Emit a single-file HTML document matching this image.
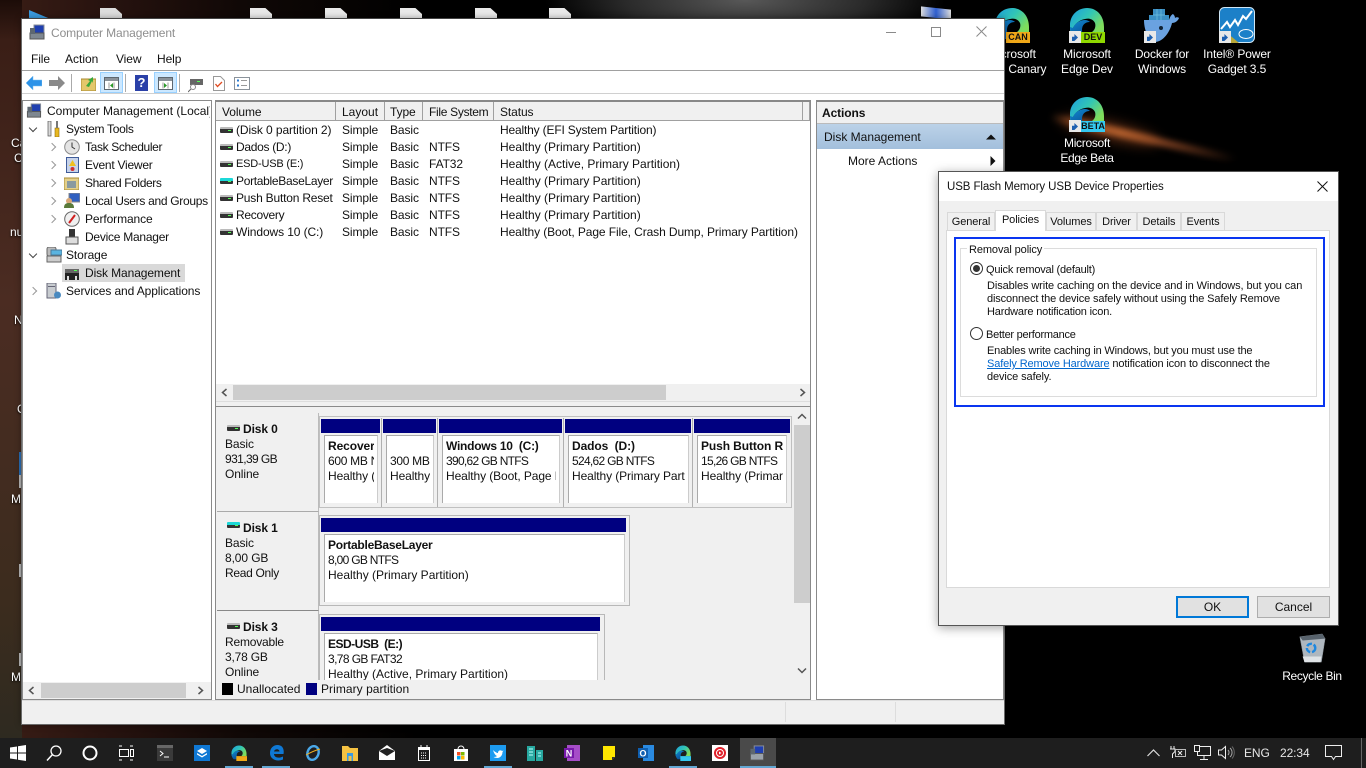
<!DOCTYPE html>
<html><head><meta charset="utf-8"><title>Computer Management</title>
<style>
*{box-sizing:border-box}
html,body{margin:0;padding:0;width:1366px;height:768px;overflow:hidden;background:#000;font-family:"Liberation Sans",sans-serif;font-size:12px;color:#111}
.a,.t,.i{position:absolute}
.t{white-space:nowrap;line-height:16px;height:16px;letter-spacing:-.1px}
.z{letter-spacing:0}
.m{letter-spacing:-.7px}
.d{color:#fff;text-align:center;text-shadow:0 1px 2px #000,0 0 2px #000;width:90px;line-height:15px;white-space:normal;height:auto}
.h{background:#f0f0f0;border-right:1px solid #a0a0a0;border-bottom:1px solid #a0a0a0;height:19px;top:102px}
.n{background:#000080;height:14px}
.b{background:#fff;border:1px solid #aaa;border-bottom:0;border-right-color:#ccc}
.w{position:absolute;left:0;top:0;right:3px;bottom:0;overflow:hidden}
.p{background:#f0f0f0;border:1px solid #b8b8b8}
.tab{background:#f0f0f0;border:1px solid #d9d9d9;border-bottom:0;text-align:center;top:212px;height:18px;line-height:19px;font-size:11px;letter-spacing:-.1px}
.dsk{position:absolute;width:13px;height:6px;background:linear-gradient(#bbb 0 2px,#333 2px);border-radius:1px}
.dsk:after{content:"";position:absolute;right:2px;top:3px;width:3px;height:1px;background:#5f5}
.ch{position:absolute;width:6px;height:6px;border-right:1.3px solid #999;border-top:1.3px solid #999;transform:rotate(45deg)}
.cd{position:absolute;width:6px;height:6px;border-right:1.4px solid #444;border-bottom:1.4px solid #444;transform:rotate(45deg)}
.doc{position:absolute;top:8px;width:22px;height:10px;background:#e9e9e9;clip-path:polygon(0 0,70% 0,100% 60%,100% 100%,0 100%)}
.tb{position:absolute;top:745px;width:16px;height:16px}
.ul{position:absolute;top:766px;height:2px;background:#63a7d3}
.sc{position:absolute;width:12px;height:12px;background:#e8e8e8}
.sc i{display:block;width:6px;height:7px;margin:3px;background:#1d5fb0;clip-path:polygon(0 100%,0 40%,40% 40%,40% 0,100% 50%,40% 100%)}
.lb{position:absolute;height:11px;color:#111;font:bold 9px/11px "Liberation Sans",sans-serif;text-align:center}
</style></head><body>

<!-- wallpaper -->
<div class="a" style="left:0;top:0;width:1366px;height:768px;background:
radial-gradient(ellipse 200px 50px at 745px 0,#585858 0,#2a2a2a 60%,rgba(0,0,0,0) 100%),
linear-gradient(90deg,#3a1e16 0,#2a1410 90px,#100806 240px,#000 420px)"></div>
<div class="a" style="left:0;top:0;width:22px;height:740px;background:linear-gradient(#1c0c08,#3a1e16 40px,#4b2c22 300px,#3c2c1e 600px,#2e2a20)"></div>
<div class="a" style="left:1048px;top:134px;width:190px;height:8px;background:linear-gradient(90deg,rgba(150,70,30,0),#b8602c 20%,#d47a3c 38%,#7a3e20 60%,rgba(60,30,20,0));transform:rotate(13deg);filter:blur(3px)"></div>
<div class="a" style="left:1060px;top:122px;width:100px;height:18px;background:rgba(150,70,30,.55);transform:rotate(13deg);filter:blur(6px);border-radius:50%"></div>

<!-- desktop icons behind -->
<div class="a" style="left:29px;top:10px;width:24px;height:10px;background:#3a9be0;clip-path:polygon(0 0,100% 100%,0 100%)"></div>
<div class="doc" style="left:100px;background:#ddd"></div>
<div class="doc" style="left:250px"></div><div class="doc" style="left:325px"></div><div class="doc" style="left:400px"></div><div class="doc" style="left:475px"></div><div class="doc" style="left:549px"></div>
<div class="a" style="left:921px;top:8px;width:30px;height:10px;background:linear-gradient(90deg,#ddd,#2f5fd0 50%,#ddd);transform:skewY(6deg)"></div>
<div class="t" style="left:11px;top:135px;color:#fff;text-shadow:0 1px 2px #000">Ca</div>
<div class="t" style="left:14px;top:150px;color:#fff;text-shadow:0 1px 2px #000">C</div>
<div class="t" style="left:10px;top:224px;color:#fff;text-shadow:0 1px 2px #000">nu</div>
<div class="t" style="left:14px;top:312px;color:#fff;text-shadow:0 1px 2px #000">N</div>
<div class="t" style="left:17px;top:401px;color:#fff;text-shadow:0 1px 2px #000">C</div>
<div class="t" style="left:11px;top:491px;color:#fff;text-shadow:0 1px 2px #000">M</div>
<div class="t" style="left:11px;top:669px;color:#fff;text-shadow:0 1px 2px #000">M</div>
<div class="a" style="left:19px;top:452px;width:2px;height:23px;background:#2a70b8"></div>
<div class="a" style="left:19px;top:475px;width:2px;height:13px;background:#bbb"></div>
<div class="a" style="left:19px;top:564px;width:2px;height:13px;background:#bbb"></div>
<div class="a" style="left:19px;top:653px;width:2px;height:13px;background:#bbb"></div>

<svg width="0" height="0" style="position:absolute"><defs>
<linearGradient id="eg" x1="0" y1="0" x2="1" y2=".6"><stop offset="0" stop-color="#1b9de2"/><stop offset=".55" stop-color="#32c6b4"/><stop offset="1" stop-color="#7fdc5c"/></linearGradient>
<linearGradient id="eb" x1="0" y1="0" x2=".6" y2="1"><stop offset="0" stop-color="#0f8ad0"/><stop offset="1" stop-color="#0b4f96"/></linearGradient>
<symbol id="edge" viewBox="0 0 36 36"><path d="M1 18C1 8 9 1 18 1c10 0 17 8 17 19v5H23c3-2 4-6 3-9-2-4-6-5-10-4-6 1-10 5-12 9l-3 3z" fill="url(#eg)"/><path d="M4 21c2-5 7-8 12-8 2 0 4 1 5 2-5 0-8 3-8 8 0 3 1 6 3 9H6C3 29 1 25 1 20z" fill="url(#eb)"/></symbol>
</defs></svg>

<!-- top right desktop icons -->
<svg class="i" style="left:994px;top:7px" width="36" height="36"><use href="#edge" width="36" height="36"/></svg>
<div class="lb" style="left:1006px;top:32px;width:24px;background:#f0a818">CAN</div>
<div class="t d" style="left:964px;top:47px;width:96px">Microsoft<br>Edge Canary</div>

<svg class="i" style="left:1069px;top:7px" width="36" height="36"><use href="#edge" width="36" height="36"/></svg>
<div class="lb" style="left:1081px;top:32px;width:24px;background:#8fd800">DEV</div>
<div class="sc" style="left:1069px;top:31px"><i></i></div>
<div class="t d" style="left:1042px;top:47px">Microsoft<br>Edge Dev</div>

<svg class="i" style="left:1144px;top:8px" width="36" height="36" viewBox="0 0 36 36"><path d="M0 12h25c1-3 2-5 4-6 1 1 2 2 2 4 1-1 3-1 4 0-1 3-4 5-7 5-2 9-9 19-17 19C6 34 0 24 0 12z" fill="#6aa2e0"/><path d="M5 12V7h4V1h12v6h4v5z" fill="#3b8fc4"/><path d="M9 7h12M13 1v11M17 1v11" stroke="#6fc0e0" stroke-width=".7"/><circle cx="17" cy="20" r="2" fill="#123"/></svg>
<div class="sc" style="left:1144px;top:31px"><i></i></div>
<div class="t d" style="left:1117px;top:47px">Docker for<br>Windows</div>

<svg class="i" style="left:1219px;top:7px" width="36" height="36" viewBox="0 0 36 36"><rect x=".5" y=".5" width="35" height="35" rx="5" fill="#1c80c8" stroke="#cfe6f5"/><path d="M2 22 8 15l3 5 5-7 3 5 5-9 3 3 6-8" fill="none" stroke="#fff" stroke-width="2"/><ellipse cx="27" cy="27" rx="7" ry="4.500" fill="#1c80c8" stroke="#fff"/><path d="M0 30 6 24 20 36H5a5 5 0 0 1-5-5z" fill="#b9a83a"/></svg>
<div class="sc" style="left:1219px;top:31px"><i></i></div>
<div class="t d" style="left:1192px;top:47px">Intel® Power<br>Gadget 3.5</div>

<svg class="i" style="left:1069px;top:96px" width="36" height="36"><use href="#edge" width="36" height="36"/></svg>
<div class="lb" style="left:1081px;top:121px;width:24px;background:#35c8f0">BETA</div>
<div class="sc" style="left:1069px;top:120px"><i></i></div>
<div class="t d" style="left:1042px;top:136px;letter-spacing:-.3px">Microsoft<br>Edge Beta</div>

<svg class="i" style="left:1297px;top:631px" width="30" height="34" viewBox="0 0 32 34"><path d="M3 5 27 2l3 5-4 25H8L3 5z" fill="#aeb7bf" stroke="#8a929a" stroke-width=".5"/><path d="M3 5l24-3 3 5-24 2z" fill="#59646e"/><path d="M6 26h20l-1 6H8z" fill="#dfe3e6"/><circle cx="15" cy="17" r="4.500" fill="none" stroke="#1e88e0" stroke-width="2.600" stroke-dasharray="6 2"/></svg>
<div class="t d" style="left:1267px;top:669px;letter-spacing:-.35px">Recycle Bin</div>

<!-- main window -->
<div class="a" style="left:21px;top:18px;width:984px;height:707px;background:#fff;border:1px solid #6a6a6a;border-top-color:#444;box-shadow:0 0 6px rgba(0,0,0,.35)"></div>
<svg class="i" style="left:29px;top:24px" width="16" height="17" viewBox="0 0 16 17"><rect x="5" y="1" width="10" height="9" fill="#1f3fb0" stroke="#8a8f98"/><rect x="1" y="9" width="14" height="6" fill="#7e8790" stroke="#555"/><rect x="1" y="4" width="5" height="6" fill="#5d6770"/></svg>
<div class="t" style="left:51px;top:25px;color:#8e8e8e;font-size:12px;letter-spacing:-.1px">Computer Management</div>
<div class="a" style="left:886px;top:32px;width:10px;height:1px;background:#8a8a8a"></div>
<div class="a" style="left:931px;top:27px;width:10px;height:10px;border:1px solid #8a8a8a"></div>
<svg class="i" style="left:976px;top:26px" width="11" height="11"><path d="M.5.5l10 10M10.5.5l-10 10" stroke="#8a8a8a"/></svg>

<div class="t" style="left:31px;top:51px">File</div><div class="t z" style="left:65px;top:51px">Action</div><div class="t" style="left:116px;top:51px">View</div><div class="t" style="left:157px;top:51px">Help</div>
<div class="a" style="left:22px;top:70px;width:982px;height:1px;background:#a0a0a0"></div>
<div class="a" style="left:22px;top:71px;width:982px;height:23px;background:#fff;border-bottom:1px solid #d0d0d0"></div>
<!-- toolbar -->
<svg class="i" style="left:26px;top:76px" width="16" height="14"><path d="M0 7 7 0v4h9v6H7v4z" fill="#2d93e8" stroke="#7cc0f0" stroke-width=".5"/></svg>
<svg class="i" style="left:49px;top:76px" width="16" height="14"><path d="M16 7 9 0v4H0v6h9v4z" fill="#8a8a8a"/></svg>
<div class="a" style="left:71px;top:74px;width:1px;height:18px;background:#aaa"></div>
<svg class="i" style="left:81px;top:76px" width="15" height="15"><rect y="3" width="15" height="12" fill="#e4c76a" stroke="#a88a30"/><path d="M5 10 9 5 7 4l5-3v6l-1-2-3 6z" fill="#3aa83a"/></svg>
<div class="a" style="left:100px;top:72px;width:23px;height:21px;background:#cce8ff;border:1px solid #99d1ff"></div>
<svg class="i" style="left:104px;top:77px" width="15" height="13"><rect x=".5" y=".5" width="14" height="12" fill="#fff" stroke="#5d6770"/><rect x="1" y="1" width="13" height="3" fill="#8a929a"/><path d="M5 5.500v6M10 5.500v6" stroke="#999"/><path d="M9 6v5L6 8.500z" fill="#2a9a2a"/></svg>
<div class="a" style="left:125px;top:74px;width:1px;height:18px;background:#aaa"></div>
<div class="a" style="left:135px;top:75px;width:13px;height:16px;background:#2a40a8;color:#fff;font:bold 13px/16px 'Liberation Sans',sans-serif;text-align:center">?</div>
<div class="a" style="left:154px;top:72px;width:23px;height:21px;background:#cce8ff;border:1px solid #99d1ff"></div>
<svg class="i" style="left:158px;top:77px" width="15" height="13"><rect x=".5" y=".5" width="14" height="12" fill="#fff" stroke="#5d6770"/><rect x="1" y="1" width="13" height="3" fill="#8a929a"/><path d="M5 5.500v6M10 5.500v6" stroke="#999"/><path d="M6 6v5l3-2.500z" fill="#2a9a2a"/></svg>
<div class="a" style="left:179px;top:74px;width:1px;height:18px;background:#aaa"></div>
<svg class="i" style="left:188px;top:78px" width="16" height="15"><rect x="2" y="1" width="13" height="6" fill="#666"/><rect x="9" y="3" width="3" height="1" fill="#5f5"/><circle cx="5" cy="9" r="2.500" fill="none" stroke="#888"/><path d="M3 11l-3 3" stroke="#666"/></svg>
<svg class="i" style="left:213px;top:76px" width="12" height="15"><path d="M.5.5h7l4 4v10H.5z" fill="#fff" stroke="#999"/><path d="M2.500 8l2 2.500L9 6" stroke="#e04a20" fill="none" stroke-width="1.300"/></svg>
<svg class="i" style="left:234px;top:77px" width="16" height="13"><rect x=".5" y=".5" width="15" height="12" fill="#fff" stroke="#8a929a"/><path d="M3 3.500h2M3 8.500h2" stroke="#2a7ad0" stroke-width="2"/><path d="M7 3.500h6M7 8.500h6" stroke="#999"/></svg>

<!-- left tree -->
<div class="a" style="left:22px;top:100px;width:190px;height:600px;background:#fff;border:1px solid #8a8a8a"></div>
<svg class="i" style="left:26px;top:103px" width="16" height="16" viewBox="0 0 16 17"><rect x="5" y="1" width="10" height="9" fill="#1f3fb0" stroke="#8a8f98"/><rect x="1" y="9" width="14" height="6" fill="#7e8790" stroke="#555"/><rect x="1" y="4" width="5" height="6" fill="#5d6770"/></svg>
<div class="a" style="left:47px;top:103px;width:163px;height:16px;overflow:hidden"><div class="t z" style="left:0;top:0">Computer Management (Local)</div></div>
<div class="cd" style="left:30px;top:125px"></div>
<svg class="i" style="left:47px;top:121px" width="14" height="16"><rect x="1" y="0" width="3" height="15" fill="#d8d8d8" stroke="#555" stroke-width=".7"/><rect x="8" y="7" width="4" height="9" fill="#e8b820" stroke="#8a6a10" stroke-width=".6"/><rect x="9" y="0" width="2" height="7" fill="#777"/></svg>
<div class="t" style="left:66px;top:121px;letter-spacing:-.3px">System Tools</div>
<div class="ch" style="left:49px;top:144px"></div>
<svg class="i" style="left:64px;top:139px" width="16" height="16"><circle cx="8" cy="8" r="7.300" fill="#e4e4e4" stroke="#8a8a8a"/><path d="M8 3.500V8l3 2" stroke="#333" fill="none"/></svg>
<div class="t" style="left:85px;top:139px;letter-spacing:-.35px">Task Scheduler</div>
<div class="ch" style="left:49px;top:162px"></div>
<svg class="i" style="left:65px;top:157px" width="14" height="16"><rect x="1.500" y=".5" width="12" height="15" fill="#c7d3ea" stroke="#3f5c9a"/><path d="M7.500 3 11 9H4z" fill="#f0c020"/><circle cx="7.500" cy="12" r="2" fill="#d03030"/></svg>
<div class="t" style="left:85px;top:157px;letter-spacing:-.25px">Event Viewer</div>
<div class="ch" style="left:49px;top:180px"></div>
<svg class="i" style="left:64px;top:175px" width="15" height="15"><rect y="3" width="15" height="12" fill="#e4d08a" stroke="#a88a30"/><rect x="3" y="6" width="9" height="7" fill="#8a9aa0"/></svg>
<div class="t" style="left:85px;top:175px;letter-spacing:-.4px">Shared Folders</div>
<div class="ch" style="left:49px;top:198px"></div>
<svg class="i" style="left:64px;top:193px" width="16" height="16"><rect x="5" y="0" width="11" height="9" fill="#2f5fc0" stroke="#888"/><circle cx="5" cy="8" r="3" fill="#d8a878"/><path d="M0 15c0-4 2-5 5-5s5 1 5 5z" fill="#5a7a3a"/></svg>
<div class="t" style="left:85px;top:193px;letter-spacing:-.3px">Local Users and Groups</div>
<div class="ch" style="left:49px;top:216px"></div>
<svg class="i" style="left:64px;top:211px" width="16" height="16"><circle cx="8" cy="8" r="7.300" fill="#f0f0f0" stroke="#666"/><path d="M5 12 11 4" stroke="#d02020" stroke-width="2"/></svg>
<div class="t" style="left:85px;top:211px">Performance</div>
<svg class="i" style="left:65px;top:229px" width="14" height="16"><rect x="4" y="0" width="6" height="8" fill="#333"/><rect x="1" y="8" width="12" height="7" fill="#ddd" stroke="#555"/></svg>
<div class="t" style="left:85px;top:229px;letter-spacing:-.25px">Device Manager</div>
<div class="cd" style="left:30px;top:251px"></div>
<svg class="i" style="left:46px;top:247px" width="16" height="16"><rect x="1" y="0" width="9" height="9" rx="2" fill="#bbb" stroke="#666"/><rect x="5" y="3" width="11" height="5" fill="#5ab4e0" stroke="#4a7a9a"/><rect x="1" y="9" width="14" height="6" fill="#ccc" stroke="#666"/></svg>
<div class="t" style="left:66px;top:247px">Storage</div>
<div class="a" style="left:62px;top:264px;width:123px;height:18px;background:#d9d9d9"></div>
<svg class="i" style="left:64px;top:268px" width="16" height="13"><rect x="1" y="1" width="14" height="4" fill="#666"/><rect x="10" y="2" width="3" height="1" fill="#5f5"/><rect x="1" y="5" width="14" height="7" fill="#222"/><rect x="3" y="8" width="2" height="4" fill="#ddd"/><rect x="11" y="8" width="2" height="4" fill="#ddd"/></svg>
<div class="t" style="left:85px;top:265px">Disk Management</div>
<div class="ch" style="left:30px;top:288px"></div>
<svg class="i" style="left:46px;top:283px" width="16" height="17"><rect x="1" y="0" width="9" height="15" fill="#c8ccd0" stroke="#667"/><rect x="2" y="3" width="7" height="1" fill="#667"/><circle cx="11.500" cy="12" r="3.500" fill="#4a8ac0"/></svg>
<div class="t" style="left:66px;top:283px">Services and Applications</div>
<div class="a" style="left:23px;top:682px;width:188px;height:17px;background:#f0f0f0"></div>
<div class="a" style="left:41px;top:683px;width:145px;height:15px;background:#cdcdcd"></div>
<svg class="i" style="left:28px;top:686px" width="7" height="9"><path d="M5.500 1 1.500 4.500 5.500 8" fill="none" stroke="#555" stroke-width="1.500"/></svg>
<svg class="i" style="left:197px;top:686px" width="7" height="9"><path d="M1.500 1 5.500 4.500 1.500 8" fill="none" stroke="#555" stroke-width="1.500"/></svg>

<!-- middle pane -->
<div class="a" style="left:215px;top:100px;width:596px;height:600px;background:#fff;border:1px solid #8a8a8a;border-top:2px solid #888"></div>
<div class="a h" style="left:216px;width:120px"></div><div class="a h" style="left:336px;width:49px"></div><div class="a h" style="left:385px;width:38px"></div><div class="a h" style="left:423px;width:71px"></div><div class="a h" style="left:494px;width:309px"></div><div class="a h" style="left:803px;width:7px"></div>
<div class="t" style="left:222px;top:104px">Volume</div><div class="t z" style="left:342px;top:104px">Layout</div><div class="t" style="left:390px;top:104px">Type</div><div class="t" style="left:429px;top:104px;letter-spacing:-.3px">File System</div><div class="t" style="left:500px;top:104px">Status</div>

<div class="dsk" style="left:220px;top:127px"></div><div class="t" style="left:236px;top:122px">(Disk 0 partition 2)</div><div class="t" style="left:342px;top:122px">Simple</div><div class="t" style="left:390px;top:122px">Basic</div><div class="t" style="left:500px;top:122px;letter-spacing:-.17px">Healthy (EFI System Partition)</div>
<div class="dsk" style="left:220px;top:144px"></div><div class="t" style="left:236px;top:139px;letter-spacing:-.3px">Dados (D:)</div><div class="t" style="left:342px;top:139px">Simple</div><div class="t" style="left:390px;top:139px">Basic</div><div class="t" style="left:429px;top:139px">NTFS</div><div class="t z" style="left:500px;top:139px">Healthy (Primary Partition)</div>
<div class="dsk" style="left:220px;top:161px"></div><div class="t" style="left:236px;top:156px;font-size:11px;letter-spacing:-.2px">ESD-USB (E:)</div><div class="t" style="left:342px;top:156px">Simple</div><div class="t" style="left:390px;top:156px">Basic</div><div class="t" style="left:429px;top:156px">FAT32</div><div class="t z" style="left:500px;top:156px">Healthy (Active, Primary Partition)</div>
<div class="dsk" style="left:220px;top:178px;background:linear-gradient(#1cd8d8 0 3px,#333 3px)"></div><div class="t" style="left:236px;top:173px;letter-spacing:-.3px">PortableBaseLayer</div><div class="t" style="left:342px;top:173px">Simple</div><div class="t" style="left:390px;top:173px">Basic</div><div class="t" style="left:429px;top:173px">NTFS</div><div class="t z" style="left:500px;top:173px">Healthy (Primary Partition)</div>
<div class="dsk" style="left:220px;top:195px"></div><div class="t" style="left:236px;top:190px;letter-spacing:-.2px">Push Button Reset</div><div class="t" style="left:342px;top:190px">Simple</div><div class="t" style="left:390px;top:190px">Basic</div><div class="t" style="left:429px;top:190px">NTFS</div><div class="t z" style="left:500px;top:190px">Healthy (Primary Partition)</div>
<div class="dsk" style="left:220px;top:212px"></div><div class="t" style="left:236px;top:207px;letter-spacing:-.3px">Recovery</div><div class="t" style="left:342px;top:207px">Simple</div><div class="t" style="left:390px;top:207px">Basic</div><div class="t" style="left:429px;top:207px">NTFS</div><div class="t z" style="left:500px;top:207px">Healthy (Primary Partition)</div>
<div class="dsk" style="left:220px;top:229px"></div><div class="t" style="left:236px;top:224px">Windows 10 (C:)</div><div class="t" style="left:342px;top:224px">Simple</div><div class="t" style="left:390px;top:224px">Basic</div><div class="t" style="left:429px;top:224px">NTFS</div><div class="t" style="left:500px;top:224px">Healthy (Boot, Page File, Crash Dump, Primary Partition)</div>

<div class="a" style="left:216px;top:384px;width:594px;height:17px;background:#f0f0f0"></div>
<div class="a" style="left:233px;top:385px;width:433px;height:15px;background:#cdcdcd"></div>
<svg class="i" style="left:221px;top:388px" width="7" height="9"><path d="M5.500 1 1.500 4.500 5.500 8" fill="none" stroke="#555" stroke-width="1.500"/></svg>
<svg class="i" style="left:799px;top:388px" width="7" height="9"><path d="M1.500 1 5.500 4.500 1.500 8" fill="none" stroke="#555" stroke-width="1.500"/></svg>
<div class="a" style="left:216px;top:401px;width:594px;height:6px;background:#f0f0f0;border-bottom:1px solid #8a8a8a;border-top:1px solid #ddd"></div>

<!-- graphical disk area -->
<div class="a" style="left:216px;top:407px;width:578px;height:273px;background:#f0f0f0"></div>
<div class="a" style="left:794px;top:407px;width:16px;height:273px;background:#f0f0f0"></div>
<div class="a" style="left:794px;top:425px;width:16px;height:178px;background:#cdcdcd"></div>
<svg class="i" style="left:797px;top:413px" width="10" height="7"><path d="M1 5.500 5 1.500l4 4" fill="none" stroke="#555" stroke-width="1.500"/></svg>
<svg class="i" style="left:797px;top:667px" width="10" height="7"><path d="M1 1.500 5 5.500l4-4" fill="none" stroke="#555" stroke-width="1.500"/></svg>

<div class="a" style="left:217px;top:413px;width:102px;height:99px;background:#f0f0f0;border-right:1px solid #bbb;border-bottom:1px solid #aaa"></div>
<div class="a" style="left:217px;top:512px;width:102px;height:99px;background:#f0f0f0;border-right:1px solid #bbb;border-bottom:1px solid #888"></div>
<div class="a" style="left:217px;top:611px;width:102px;height:69px;background:#f0f0f0;border-right:1px solid #bbb"></div>

<div class="dsk" style="left:227px;top:425px"></div><div class="t" style="left:243px;top:421px;font-weight:bold">Disk 0</div>
<div class="t" style="left:225px;top:436px">Basic</div><div class="t" style="left:225px;top:451px;letter-spacing:-.6px">931,39 GB</div><div class="t" style="left:225px;top:466px">Online</div>
<div class="dsk" style="left:227px;top:522px;background:linear-gradient(#1cd8d8 0 3px,#333 3px)"></div><div class="t" style="left:243px;top:520px;font-weight:bold">Disk 1</div>
<div class="t" style="left:225px;top:535px">Basic</div><div class="t" style="left:225px;top:550px">8,00 GB</div><div class="t" style="left:225px;top:565px;letter-spacing:-.3px">Read Only</div>
<div class="dsk" style="left:227px;top:623px"></div><div class="t" style="left:243px;top:619px;font-weight:bold">Disk 3</div>
<div class="t" style="left:225px;top:634px;letter-spacing:-.2px">Removable</div><div class="t" style="left:225px;top:649px;letter-spacing:-.2px">3,78 GB</div><div class="t" style="left:225px;top:664px">Online</div>

<!-- Disk 0 -->
<div class="a p" style="left:319px;top:416px;width:473px;height:92px;background:#f0f0f0;border-color:#c0c0c0"></div>
<div class="a" style="left:381px;top:418px;width:1px;height:89px;background:#b0b0b0"></div><div class="a" style="left:437px;top:418px;width:1px;height:89px;background:#b0b0b0"></div><div class="a" style="left:563px;top:418px;width:1px;height:89px;background:#b0b0b0"></div><div class="a" style="left:692px;top:418px;width:1px;height:89px;background:#b0b0b0"></div>
<div class="a n" style="left:321px;top:419px;width:59px"></div><div class="a n" style="left:383px;top:419px;width:53px"></div><div class="a n" style="left:439px;top:419px;width:123px"></div><div class="a n" style="left:565px;top:419px;width:126px"></div><div class="a n" style="left:694px;top:419px;width:96px"></div>

<div class="a b" style="left:324px;top:435px;width:54px;height:68px"><div class="w"><div class="t" style="left:3px;top:2px;font-weight:bold">Recovery</div><div class="t" style="left:3px;top:17px;letter-spacing:-.3px">600 MB NTFS</div><div class="t" style="left:3px;top:32px">Healthy (Primary</div></div></div>
<div class="a b" style="left:386px;top:435px;width:48px;height:68px"><div class="w"><div class="t" style="left:3px;top:17px;letter-spacing:-.3px">300 MB</div><div class="t" style="left:3px;top:32px">Healthy</div></div></div>
<div class="a b" style="left:442px;top:435px;width:118px;height:68px"><div class="w"><div class="t" style="left:3px;top:2px;font-weight:bold;letter-spacing:-.25px">Windows 10 &nbsp;(C:)</div><div class="t m" style="left:3px;top:17px">390,62 GB NTFS</div><div class="t" style="left:3px;top:32px">Healthy (Boot, Page File</div></div></div>
<div class="a b" style="left:568px;top:435px;width:121px;height:68px"><div class="w"><div class="t" style="left:3px;top:2px;font-weight:bold">Dados &nbsp;(D:)</div><div class="t m" style="left:3px;top:17px">524,62 GB NTFS</div><div class="t" style="left:3px;top:32px">Healthy (Primary Partition)</div></div></div>
<div class="a b" style="left:697px;top:435px;width:90px;height:68px"><div class="w"><div class="t" style="left:3px;top:2px;font-weight:bold">Push Button Reset</div><div class="t m" style="left:3px;top:17px">15,26 GB NTFS</div><div class="t" style="left:3px;top:32px">Healthy (Primary</div></div></div>

<!-- Disk 1 -->
<div class="a p" style="left:319px;top:515px;width:311px;height:91px;background:#f0f0f0;border-color:#b8b8b8"></div>
<div class="a n" style="left:321px;top:518px;width:305px"></div>
<div class="a b" style="left:324px;top:534px;width:301px;height:68px"><div class="t" style="left:3px;top:2px;font-weight:bold;letter-spacing:-.25px">PortableBaseLayer</div><div class="t m" style="left:3px;top:17px">8,00 GB NTFS</div><div class="t z" style="left:3px;top:32px">Healthy (Primary Partition)</div></div>

<!-- Disk 3 -->
<div class="a" style="left:319px;top:614px;width:286px;height:66px;background:#f0f0f0;border:1px solid #b8b8b8;border-bottom:0"></div>
<div class="a n" style="left:321px;top:617px;width:279px"></div>
<div class="a b" style="left:324px;top:633px;width:274px;height:47px"><div class="w"><div class="t" style="left:3px;top:2px;font-weight:bold;letter-spacing:-.5px">ESD-USB &nbsp;(E:)</div><div class="t" style="left:3px;top:17px;letter-spacing:-.6px">3,78 GB FAT32</div><div class="t z" style="left:3px;top:32px">Healthy (Active, Primary Partition)</div></div></div>

<!-- legend -->
<div class="a" style="left:216px;top:680px;width:594px;height:19px;background:#f0f0f0"></div>
<div class="a" style="left:222px;top:683px;width:11px;height:12px;background:#000"></div><div class="t z" style="left:237px;top:681px">Unallocated</div>
<div class="a" style="left:306px;top:683px;width:11px;height:12px;background:#000080"></div><div class="t z" style="left:321px;top:681px;letter-spacing:.05px">Primary partition</div>

<!-- actions -->
<div class="a" style="left:816px;top:100px;width:188px;height:600px;background:#fff;border:1px solid #8a8a8a;border-top:2px solid #888"></div>
<div class="a" style="left:817px;top:102px;width:186px;height:22px;background:#f0f0f0;border-bottom:1px solid #bbb"></div>
<div class="t" style="left:822px;top:105px;font-weight:bold">Actions</div>
<div class="a" style="left:817px;top:124px;width:186px;height:25px;background:linear-gradient(#bcd2e8,#a3bfdc)"></div>
<div class="t z" style="left:824px;top:129px">Disk Management</div>
<svg class="i" style="left:986px;top:134px" width="10" height="6"><path d="M0 5.500 5 .5l5 5z" fill="#111"/></svg>
<div class="t z" style="left:848px;top:153px">More Actions</div>
<svg class="i" style="left:990px;top:156px" width="6" height="10"><path d="M.5 0l5 5-5 5z" fill="#111"/></svg>

<!-- status bar -->
<div class="a" style="left:22px;top:700px;width:982px;height:24px;background:#f0f0f0;border-top:1px solid #ddd"></div>
<div class="a" style="left:785px;top:702px;width:1px;height:20px;background:#ddd"></div>
<div class="a" style="left:895px;top:702px;width:1px;height:20px;background:#ddd"></div>

<!-- properties dialog -->
<div class="a" style="left:938px;top:171px;width:401px;height:455px;background:#f0f0f0;border:1px solid #555;box-shadow:0 2px 10px rgba(0,0,0,.35)"></div>
<div class="a" style="left:939px;top:172px;width:399px;height:29px;background:#fff"></div>
<div class="t" style="left:947px;top:179px;font-size:11.5px">USB Flash Memory USB Device Properties</div>
<svg class="i" style="left:1317px;top:181px" width="11" height="11"><path d="M.5.5l10 10M10.500.5l-10 10" stroke="#111"/></svg>

<div class="a" style="left:946px;top:230px;width:384px;height:358px;background:#fff;border:1px solid #d9d9d9"></div>
<div class="a tab" style="left:947px;width:48px">General</div>
<div class="a tab" style="left:995px;top:210px;width:51px;height:21px;background:#fff;line-height:18px">Policies</div>
<div class="a tab" style="left:1046px;width:50px">Volumes</div>
<div class="a tab" style="left:1096px;width:41px">Driver</div>
<div class="a tab" style="left:1137px;width:44px">Details</div>
<div class="a tab" style="left:1181px;width:44px">Events</div>

<div class="a" style="left:954px;top:237px;width:371px;height:170px;border:2px solid #0a35f0"></div>
<div class="a" style="left:960px;top:248px;width:357px;height:149px;border:1px solid #dcdcdc"></div>
<div class="t" style="left:967px;top:242px;background:#fff;padding:0 2px;font-size:11px">Removal policy</div>

<div class="a" style="left:970px;top:262px;width:13px;height:13px;border:1px solid #333;border-radius:50%;background:#fff"><div style="width:7px;height:7px;margin:2px;border-radius:50%;background:#333"></div></div>
<div class="t" style="left:986px;top:262px;font-size:11px;letter-spacing:-.2px">Quick removal (default)</div>
<div class="t" style="left:987px;top:278px;font-size:11px">Disables write caching on the device and in Windows, but you can</div>
<div class="t" style="left:987px;top:291px;font-size:11px;letter-spacing:-.13px">disconnect the device safely without using the Safely Remove</div>
<div class="t" style="left:987px;top:304px;font-size:11px;letter-spacing:-.17px">Hardware notification icon.</div>
<div class="a" style="left:970px;top:327px;width:13px;height:13px;border:1px solid #333;border-radius:50%;background:#fff"></div>
<div class="t" style="left:986px;top:327px;font-size:11px;letter-spacing:-.25px">Better performance</div>
<div class="t" style="left:987px;top:343px;font-size:11px;letter-spacing:-.17px">Enables write caching in Windows, but you must use the</div>
<div class="t" style="left:987px;top:356px;font-size:11px;letter-spacing:-.13px"><span style="color:#0066cc;text-decoration:underline">Safely Remove Hardware</span> notification icon to disconnect the</div>
<div class="t" style="left:987px;top:369px;font-size:11px">device safely.</div>

<div class="a" style="left:1176px;top:596px;width:73px;height:22px;background:#e1e1e1;border:2px solid #0078d7;text-align:center;line-height:18px">OK</div>
<div class="a" style="left:1257px;top:596px;width:73px;height:22px;background:#e1e1e1;border:1px solid #adadad;text-align:center;line-height:20px">Cancel</div>

<!-- taskbar -->
<div class="a" style="left:0;top:738px;width:1366px;height:30px;background:#1e1e1e"></div>
<div class="a" style="left:740px;top:738px;width:36px;height:30px;background:#4a4a4a"></div>
<div class="ul" style="left:225px;width:28px"></div><div class="ul" style="left:262px;width:28px"></div><div class="ul" style="left:484px;width:28px"></div><div class="ul" style="left:669px;width:28px"></div><div class="ul" style="left:740px;width:36px"></div>

<svg class="tb" style="left:10px" viewBox="0 0 16 16"><path d="M0 2.500 7 1.500V7.500H0zM8 1.300 16 0V7.500H8zM0 8.500H7V14.500L0 13.500zM8 8.500H16V16L8 14.700z" fill="#fff"/></svg>
<svg class="tb" style="left:46px" viewBox="0 0 16 16"><circle cx="10" cy="6" r="5" fill="none" stroke="#fff" stroke-width="1.300"/><path d="M6.500 9.500 1 15.500" stroke="#fff" stroke-width="1.500"/></svg>
<svg class="tb" style="left:82px" viewBox="0 0 16 16"><circle cx="8" cy="8" r="6.500" fill="none" stroke="#fff" stroke-width="2"/></svg>
<svg class="tb" style="left:118px" viewBox="0 0 16 16"><path d="M1 1h3M12 1h3M1 15h3M12 15h3" stroke="#fff"/><rect x="1.500" y="4.500" width="9" height="7" fill="none" stroke="#fff"/><rect x="12.500" y="4.500" width="3" height="7" fill="none" stroke="#fff"/></svg>
<svg class="tb" style="left:157px" viewBox="0 0 16 16"><rect width="16" height="16" fill="#3a3a3a"/><rect width="16" height="3" fill="#666"/><path d="M3 6l3 2.500L3 11" fill="none" stroke="#fff"/><path d="M7 12h5" stroke="#fff"/></svg>
<svg class="tb" style="left:194px" viewBox="0 0 16 16"><rect width="16" height="16" fill="#0f78d4"/><path d="M8 3l5 3-5 3-5-3zM3 8l5 3 5-3v1.500l-5 3-5-3z" fill="#fff"/></svg>
<svg class="tb" style="left:231px" viewBox="0 0 36 36"><use href="#edge" width="36" height="36"/><rect x="12" y="25" width="24" height="11" fill="#f0a818"/></svg>
<svg class="tb" style="left:269px" viewBox="0 0 16 16"><path d="M14.500 9H5c0 3 4 5 9 2.500V14.500C8 17 1 14.500 1 8c0-5 3.500-8 7.500-8 4.500 0 7 3.500 6 9zM5 6.500h5.500C10.500 3.500 5.500 3.500 5 6.500z" fill="#0f78d4"/></svg>
<svg class="tb" style="left:305px" viewBox="0 0 16 16"><ellipse cx="8" cy="8" rx="5.500" ry="7" fill="none" stroke="#4aa8e8" stroke-width="2.400" transform="rotate(20 8 8)"/><path d="M1 10Q8 6 15 4" stroke="#f0b020" fill="none"/></svg>
<svg class="tb" style="left:342px" viewBox="0 0 16 16"><path d="M0 1h6l2 2h8v13H0z" fill="#f5c242"/><path d="M5 16V8h6v8H9.500v-5h-3v5z" fill="#3a9be0"/></svg>
<svg class="tb" style="left:379px" viewBox="0 0 16 16"><path d="M0 6 8 0l8 6v9H0z" fill="#fff"/><path d="M0 6l8 5 8-5-8-3z" fill="#222"/></svg>
<svg class="tb" style="left:416px" viewBox="0 0 16 16"><rect x="2.500" y="2.500" width="11" height="13" fill="none" stroke="#fff"/><rect x="2" y="2" width="12" height="3" fill="#fff"/><path d="M5 0v3M11 0v3" stroke="#fff"/><path d="M5 8h6M5 10.500h6M5 13h6" stroke="#fff" stroke-dasharray="1 1"/></svg>
<svg class="tb" style="left:453px" viewBox="0 0 16 16"><path d="M1 4h14v12H1z" fill="#fff"/><path d="M5 4a3 3 0 0 1 6 0" fill="none" stroke="#fff"/><rect x="4" y="7" width="3.500" height="3.500" fill="#f25022"/><rect x="8" y="7" width="3.500" height="3.500" fill="#7fba00"/><rect x="4" y="11" width="3.500" height="3.500" fill="#00a4ef"/><rect x="8" y="11" width="3.500" height="3.500" fill="#ffb900"/></svg>
<svg class="tb" style="left:490px" viewBox="0 0 16 16"><rect width="16" height="16" fill="#1d9bf0"/><path d="M3 5c2 2 4 3 5 3 0-3 3-3 4-2l1.500-.5-1 1.500c0 4-3 6-5 6-2 0-3-.5-4-1 2 0 3-.5 3.500-1C5 10 4 8 3 5z" fill="#fff"/></svg>
<svg class="tb" style="left:527px" viewBox="0 0 16 16"><path d="M0 1h8v15H0zM9 5h7v11H9z" fill="#27a8a0"/><path d="M2 4h4M2 7h4M2 10h4M11 8h3M11 11h3" stroke="#bff"/></svg>
<svg class="tb" style="left:564px" viewBox="0 0 16 16"><rect x="3" width="13" height="16" fill="#a64dc8"/><rect y="3" width="10" height="10" fill="#7719aa"/><text x="5" y="11.500" font-size="9" font-weight="bold" fill="#fff" text-anchor="middle" font-family="Liberation Sans">N</text></svg>
<svg class="tb" style="left:601px" viewBox="0 0 16 16"><path d="M2 1h12v11l-3 3H2z" fill="#ffe600"/><path d="M11 15v-3h3z" fill="#333"/></svg>
<svg class="tb" style="left:638px" viewBox="0 0 16 16"><path d="M5 0h11v16H5z" fill="#2a8ae0"/><rect y="3" width="10" height="10" fill="#0f5fb0"/><text x="5" y="11.500" font-size="9" font-weight="bold" fill="#fff" text-anchor="middle" font-family="Liberation Sans">O</text></svg>
<svg class="tb" style="left:675px" viewBox="0 0 36 36"><use href="#edge" width="36" height="36"/><rect x="12" y="25" width="24" height="11" fill="#35c8f0"/></svg>
<svg class="tb" style="left:712px" viewBox="0 0 16 16"><rect width="16" height="16" fill="#fff"/><circle cx="8" cy="8" r="6" fill="#e0202a"/><circle cx="8" cy="8" r="3.500" fill="none" stroke="#fff"/><path d="M7 6.500v3l2.500-1.500z" fill="#fff"/></svg>
<svg class="tb" style="left:749px" viewBox="0 0 16 17"><rect x="5" y="1" width="10" height="9" fill="#1f3fb0" stroke="#8a8f98"/><rect x="1" y="9" width="14" height="7" fill="#9aa2aa" stroke="#555"/><rect x="1" y="4" width="5" height="6" fill="#5d6770"/></svg>

<!-- tray -->
<svg class="i" style="left:1147px;top:749px" width="13" height="8"><path d="M.5 7 6.500 1l6 6" fill="none" stroke="#ddd" stroke-width="1.200"/></svg>
<svg class="i" style="left:1169px;top:745px" width="18" height="14"><path d="M2 1v3M5 1v3M1 4h5v2.500L3.500 9v4" fill="none" stroke="#eee"/><rect x="6.500" y="4.500" width="10" height="7" fill="none" stroke="#bbb"/><path d="M9 6l4 4M13 6l-4 4" stroke="#eee"/></svg>
<svg class="i" style="left:1194px;top:745px" width="17" height="15"><rect x="3.500" y="1.500" width="13" height="9" fill="none" stroke="#eee"/><rect x=".5" y=".5" width="5" height="6" fill="#1e1e1e" stroke="#eee"/><path d="M10 11v3M6 14.500h8" stroke="#eee"/></svg>
<svg class="i" style="left:1218px;top:745px" width="17" height="15"><path d="M.5 5h3l4-3.500v12l-4-3.500h-3z" fill="none" stroke="#eee"/><path d="M10 5a3.500 3.500 0 0 1 0 5M12 3a6 6 0 0 1 0 9" fill="none" stroke="#aaa"/><path d="M14 1.500a9 9 0 0 1 0 12" fill="none" stroke="#666"/></svg>
<div class="t" style="left:1244px;top:745px;color:#e8e8e8">ENG</div>
<div class="t" style="left:1280px;top:745px;color:#e8e8e8">22:34</div>
<svg class="i" style="left:1325px;top:744px" width="17" height="17"><path d="M.5 1.500h16v11h-6l-2 3-2-3h-6z" fill="none" stroke="#eee"/></svg>
<div class="a" style="left:1361px;top:738px;width:1px;height:30px;background:#666"></div>

</body></html>
